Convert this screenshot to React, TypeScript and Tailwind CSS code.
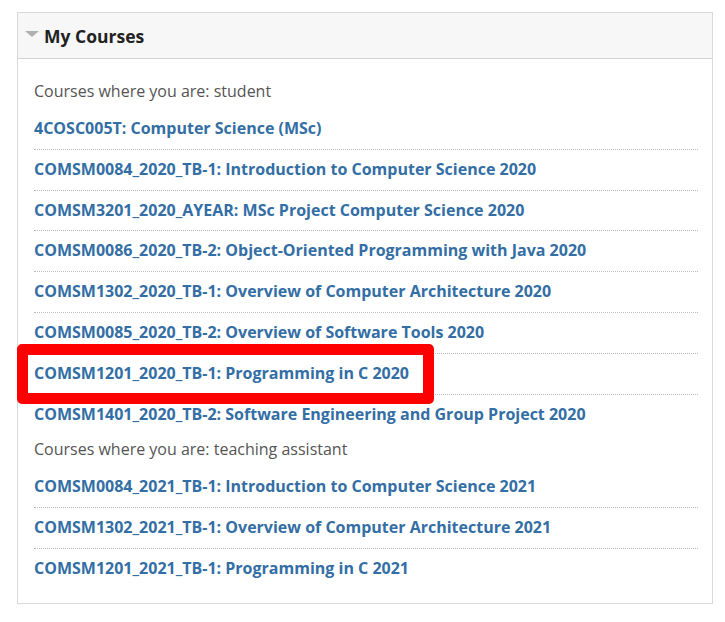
const student = [
  '4COSC005T: Computer Science (MSc)',
  'COMSM0084_2020_TB-1: Introduction to Computer Science 2020',
  'COMSM3201_2020_AYEAR: MSc Project Computer Science 2020',
  'COMSM0086_2020_TB-2: Object-Oriented Programming with Java 2020',
  'COMSM1302_2020_TB-1: Overview of Computer Architecture 2020',
  'COMSM0085_2020_TB-2: Overview of Software Tools 2020',
  'COMSM1201_2020_TB-1: Programming in C 2020',
  'COMSM1401_2020_TB-2: Software Engineering and Group Project 2020',
];

const teaching = [
  'COMSM0084_2021_TB-1: Introduction to Computer Science 2021',
  'COMSM1302_2021_TB-1: Overview of Computer Architecture 2021',
  'COMSM1201_2021_TB-1: Programming in C 2021',
];

function CourseList({ items }: { items: string[] }) {
  return (
    <ul>
      {items.map((c, i) => (
        <li
          key={c}
          className={`py-[9px] leading-[21.8px] ${
            i < items.length - 1 ? 'border-b border-dotted border-[#bdbdbd]' : ''
          }`}
        >
          <a href="#" className="text-[16px] font-bold text-[#336ea5]">
            {c}
          </a>
        </li>
      ))}
    </ul>
  );
}

export default function App() {
  return (
    <div
      className="relative min-h-[622px] bg-white pt-[12px] pl-[17px]"
      style={{ fontFamily: '"Open Sans", "Liberation Sans", sans-serif' }}
    >
      <div className="w-[696px] border border-[#d9d9d9]">
        <div className="flex h-[46px] items-center gap-[5px] border-b border-[#d3d3d3] bg-[#f7f7f7] pl-[7px]">
          <svg width="14" height="6" viewBox="0 0 14 6" className="mt-[-4px]">
            <polygon points="0,0 14,0 7,6" fill="#b0b0b0" />
          </svg>
          <h2 className="mt-[2px] text-[17.5px] font-bold text-[#222]">My Courses</h2>
        </div>
        <div className="pr-[14px] pl-[16px] pt-[21px] pb-[14px]">
          <div className="mb-[7px] text-[16px] leading-[22px] text-[#555]">
            Courses where you are: student
          </div>
          <CourseList items={student} />
          <div className="mt-[4px] mb-[7px] text-[16px] leading-[22px] text-[#555]">
            Courses where you are: teaching assistant
          </div>
          <CourseList items={teaching} />
        </div>
      </div>
      <div className="absolute top-[344px] left-[17px] h-[60px] w-[417px] rounded-[5px] border-[11px] border-[#ff0000]" />
    </div>
  );
}
